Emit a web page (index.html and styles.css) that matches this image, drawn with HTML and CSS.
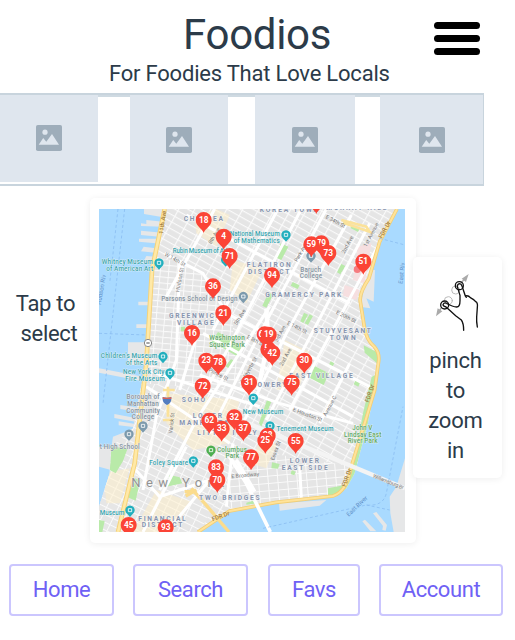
FILE: index.html
```html
<!DOCTYPE html>
<html lang="en">
<head>
<meta charset="utf-8">
<title>Foodios</title>
<link rel="stylesheet" href="styles.css">
</head>
<body>
<svg class="defs" aria-hidden="true">
  <symbol id="image" viewBox="0 0 26 26">
    <rect width="26" height="26" rx="1.8" fill="#9eadba"/>
    <circle cx="9" cy="7.2" r="2.6" fill="#dfe6ee"/>
    <path d="M2.7 19.7 7.2 13l3.1 3.8L16 9l7 10.7z" fill="#dfe6ee"/>
  </symbol>
</svg>
<header class="header">
  <div class="brand">
    <h1 class="title">Foodios</h1>
    <p class="tagline">For Foodies That Love Locals</p>
  </div>
  <button class="menu" aria-label="Menu"><span></span><span></span><span></span></button>
</header>
<section class="strip">
  <div class="tile tile-first"><svg class="thumb"><use href="#image"/></svg></div>
  <div class="gap"></div>
  <div class="tile"><svg class="thumb"><use href="#image"/></svg></div>
  <div class="gap"></div>
  <div class="tile"><svg class="thumb"><use href="#image"/></svg></div>
  <div class="gap"></div>
  <div class="tile"><svg class="thumb"><use href="#image"/></svg></div>
</section>
<main class="main">
  <p class="tap"><span>Tap to</span><span class="tap-second">select</span></p>
  <div class="card map-card">
    <svg class="map" viewBox="298 57 918 969" preserveAspectRatio="none">
      <defs>
        <pattern id="grid" width="42" height="19" patternUnits="userSpaceOnUse" patternTransform="translate(800 360) rotate(29)">
          <rect width="42" height="19" fill="#e5e5e5"/>
          <path d="M0 0H42M0 0V19" stroke="#fafafa" stroke-width="7"/>
        </pattern>
        <pattern id="west" width="25" height="18" patternUnits="userSpaceOnUse" patternTransform="rotate(5)">
          <rect width="25" height="18" fill="#e5e5e5"/>
          <path d="M0 0H25M0 0V18" stroke="#fafafa" stroke-width="6"/>
        </pattern>
        <pattern id="south" width="32" height="21" patternUnits="userSpaceOnUse" patternTransform="rotate(26)">
          <rect width="32" height="21" fill="#e6e6e6"/>
          <path d="M0 0H32M0 0V21" stroke="#fafafa" stroke-width="6"/>
        </pattern>
        <pattern id="les" width="29" height="22" patternUnits="userSpaceOnUse" patternTransform="rotate(-5)">
          <rect width="29" height="22" fill="#e5e5e5"/>
          <path d="M0 0H29M0 0V22" stroke="#fafafa" stroke-width="6"/>
        </pattern>
        <path id="pin" d="M0 39C-5 25-24 18-24 0A24 24 0 1 1 24 0C24 18 5 25 0 39Z" fill="#fb4436"/>
        <g id="poi"><path d="M0 18-8 9A14 14 0 1 1 8 9Z"/><path d="M-5-7H5V2H-5Z" fill="none" stroke="#fff" stroke-width="2.5"/></g>
        <clipPath id="land"><path d="M494 57H1192L1140 155 1108 265 1082 325 1092 420 1112 460 1138 500 1133 555 1105 700 1065 850 1040 895 1000 920 830 940 690 965 600 1026H298V950L330 850 335 770 400 715 430 560 455 330 460 230Z"/></clipPath>
      </defs>
      <rect x="298" y="57" width="918" height="969" fill="#a9daff"/>
      <g fill="#e6e7e8">
        <path d="M433 57H500V83L433 72ZM440 90 490 95V110L424 108V100L440 102ZM424 122 488 128V141L424 135ZM418 146H485V161L418 155ZM432 170 480 176V190L424 184ZM440 198 475 201V214L434 210Z"/>
        <path d="M385 457H450V500L430 525H385ZM298 535 430 560V574L298 548ZM362 645 425 655V667L362 657ZM344 672 424 687V698L344 684ZM357 694 420 704V713L357 706ZM410 403H455V414H410ZM416 335H458V346H416ZM340 740 405 715 370 850 298 830V770L335 773Z"/>
        <path d="M1108 240H1126L1122 335 1100 325 1112 355 1080 350ZM838 940 980 930 960 947 840 962ZM1216 805 1190 890 1170 920 1172 970 1182 1026H1216ZM1120 970 1130 966 1162 1005 1158 1022 1148 1020 1150 1008ZM1088 994 1096 989 1130 1024H1112Z"/>
      </g>
      <g clip-path="url(#land)">
        <rect x="298" y="57" width="918" height="969" fill="url(#grid)"/>
        <path d="M455 200 560 220 700 320 700 430 740 570 500 640 430 610Z" fill="url(#west)"/>
        <path d="M420 580 740 600 720 800 600 1026H298V730Z" fill="url(#south)"/>
        <path d="M810 790 1065 830 1040 950 690 965 690 860Z" fill="url(#les)"/>
        <g fill="#fff0c8" opacity=".5">
          <path d="M585 80 650 57 690 75 650 170 590 130ZM700 210 790 235 740 340 690 300ZM855 450 930 485 900 590 830 600ZM500 610 720 630 690 760 580 780 500 700ZM310 850 390 835 360 940 320 940ZM470 900 575 935 520 1026H400ZM780 750 830 765 800 835 755 820Z"/>
        </g>
        <g fill="#f6dfe0"><path d="M1075 170 1115 160 1095 280 1060 270ZM1035 285 1080 300 1070 330 1030 317Z"/></g>
        <g fill="#b9eaa9">
          <path d="M843 160 866 170 845 210 830 203ZM807 307 820 315 800 353 788 347ZM913 368 925 374 911 399 902 394ZM930 373 940 378 925 405 915 400ZM1025 222 1037 228 1022 253 1012 247ZM879 276 900 286 894 297 873 287ZM655 426 685 443 732 478 710 497 636 455ZM694 507 707 514 690 537 677 529ZM945 528 988 550 972 585 931 564ZM1068 570 1082 576 1076 590 1062 583ZM993 514 1004 520 998 531 987 526ZM1092 466 1138 490 1132 520 1095 488ZM1116 560 1133 552 1105 700 1065 850 1040 925 985 932 985 895 1035 885 1065 800 1090 670ZM802 630 815 635 785 710 778 700ZM335 770 384 775 370 813 348 850 330 840ZM388 860 422 870 408 932 384 922ZM510 855 540 862 548 880 500 890ZM817 817 840 822 835 836 815 835ZM876 840 888 845 884 856 873 852ZM740 938 768 930 770 940 740 944ZM395 467H422V487H395ZM543 410H557V424H543ZM1058 104 1080 116 1075 126 1052 114ZM298 990 315 993 308 1026H298Z"/>
        </g>
        <g stroke="#fff" stroke-width="9" fill="none">
          <path d="M645 57 500 320M835 57 640 420M905 57 630 580M980 57 765 460 630 730M1055 75 860 430 730 700M1110 100 800 690M1150 140 870 660M810 350 590 690 480 900M560 75 1050 340M495 190 610 250 680 370 1110 590M610 430 1060 680M470 550 780 650M600 555 840 640 1060 700M1050 520 960 700M540 220 530 510 470 680 430 900M590 440 540 600M440 590 690 760M395 825 480 920 630 870M630 870 500 1026M560 770 430 1026M700 760 680 950M900 830 905 925"/>
        </g>
        <path d="M800 355 806 450 775 600" stroke="#fff" stroke-width="13" fill="none"/>
        <path d="M505 590V680M490 600H525M490 690H520M1025 90 1100 110 1110 125 1030 98" stroke="#fbe29a" stroke-width="8" fill="none"/>
      </g>
      <path d="M495 57 457 240 440 520 405 820 355 1026" fill="none" stroke="#f6d37a" stroke-width="14"/>
      <path d="M495 57 457 240 440 520 405 820 355 1026" fill="none" stroke="#ffe9a7" stroke-width="8"/>
      <path d="M1192 57 1140 155 1108 265Q1078 310 1082 335L1094 410Q1100 450 1124 470 1142 490 1136 520L1125 600 1095 700 1055 830Q1042 905 1000 918L830 937 690 963 595 1026" fill="none" stroke="#f3ce75" stroke-width="11"/>
      <path d="M1192 57 1140 155 1108 265Q1078 310 1082 335L1094 410Q1100 450 1124 470 1142 490 1136 520L1125 600 1095 700 1055 830Q1042 905 1000 918L830 937 690 963 595 1026" fill="none" stroke="#ffe39a" stroke-width="6"/>
      <path d="M555 905H590M575 895 615 940 688 1026M558 918 590 900" fill="none" stroke="#fbdc8d" stroke-width="10"/>
      <path d="M690 800 740 880 812 1026M710 810 765 905" fill="none" stroke="#fff" stroke-width="11"/>
      <path d="M745 700 890 760 1060 830 1216 895" fill="none" stroke="#f4f4f4" stroke-width="13"/>
      <g fill="none" stroke="#83b7ee" stroke-width="2" stroke-dasharray="9 7">
        <path d="M375 57 310 640M355 57 330 280M298 430 440 435M1140 145 1216 165M790 1015 1100 945Q1150 950 1160 910L1210 650M1100 945 1170 960"/>
      </g>
      <g fill="#22afbe">
        <use href="#poi" x="478" y="221"/><use href="#poi" x="859" y="137"/><use href="#poi" x="678" y="212"/><use href="#poi" x="490" y="502"/><use href="#poi" x="511" y="551"/><use href="#poi" x="761" y="627"/><use href="#poi" x="811" y="710"/><use href="#poi" x="581" y="815"/><use href="#poi" x="391" y="963"/>
      </g>
      <g fill="#7c9aad"><use href="#poi" x="731" y="322"/><use href="#poi" x="934" y="200"/><use href="#poi" x="430" y="710"/><use href="#poi" x="388" y="735"/></g>
      <g fill="#4daf50"><use href="#poi" x="634" y="783"/></g>
      <circle cx="1073" cy="238" r="11" fill="#f57c80"/>
      <circle cx="445" cy="459" r="11" fill="#fff" stroke="#888" stroke-width="3"/>
      <path d="M440 459H450" stroke="#777" stroke-width="4"/>
      <path d="M489 621Q502 626 515 621 517 640 502 645 487 640 489 621Z" fill="#527dc0"/><path d="M489 621Q502 626 515 621V627H489Z" fill="#d5645c"/>
      <g class="district">
        <text x="611" y="94" textLength="118">CHELSEA</text><text x="868" y="65" textLength="176">KOREA TOWN</text><text x="1070" y="60" textLength="180">MURRAY HILL</text>
        <text x="807" y="232" textLength="132">FLATIRON</text><text x="807" y="253" textLength="124">DISTRICT</text>
        <text x="911" y="321" textLength="228">GRAMERCY PARK</text><text x="585" y="385" textLength="154">GREENWICH</text><text x="587" y="406" textLength="110">VILLAGE</text>
        <text x="1028" y="429" textLength="172">STUYVESANT</text><text x="1029" y="450" textLength="78">TOWN</text><text x="964" y="563" textLength="190">EAST VILLAGE</text>
        <text x="808" y="590" textLength="104">BOWERY</text><text x="581" y="636" textLength="70">SOHO</text><text x="623" y="684" textLength="88">LOWER</text><text x="622" y="704" textLength="166">MANHATTAN</text><text x="682" y="734" textLength="178">LITTLE ITALY</text>
        <text x="914" y="819" textLength="88">LOWER</text><text x="915" y="840" textLength="138">EAST SIDE</text><text x="689" y="930" textLength="182">TWO BRIDGES</text><text x="487" y="992" textLength="142">FINANCIAL</text><text x="487" y="1012" textLength="122">DISTRICT</text>
      </g>
      <g class="museum">
        <text x="765" y="139" textLength="150">National Museum</text><text x="771" y="159" textLength="138">of Mathematics</text><text x="602" y="190" textLength="165">Rubin Museum of Art</text>
        <text x="383" y="223" textLength="153">Whitney Museum</text><text x="390" y="242" textLength="140">of American Art</text>
        <text x="388" y="505" textLength="169">Children's Museum</text><text x="426" y="524" textLength="94">of the Arts</text><text x="432" y="552" textLength="124">New York City</text><text x="436" y="572" textLength="118">Fire Museum</text>
        <text x="790" y="671" textLength="121">New Museum</text><text x="916" y="722" textLength="171">Tenement Museum</text><text x="507" y="826" textLength="117">Foley Square</text><text x="337" y="975" textLength="74">Museum</text>
      </g>
      <g class="place">
        <text x="599" y="333" textLength="229">Parsons School of Design</text><text x="933" y="246" textLength="62">Baruch</text><text x="934" y="264" textLength="67">College</text>
        <text x="430" y="628" textLength="99">Borough of</text><text x="430" y="648" textLength="94">Manhattan</text><text x="430" y="668" textLength="101">Community</text><text x="430" y="688" textLength="67">College</text><text x="360" y="778" textLength="120">t High School</text>
      </g>
      <g class="park">
        <text x="682" y="450" textLength="106">Washington</text><text x="682" y="470" textLength="107">Square Park</text><text x="697" y="785" textLength="90">Columbus</text><text x="698" y="804" textLength="41">Park</text>
        <text x="1088" y="721" textLength="60">John V</text><text x="1089" y="740" textLength="112">Lindsay East</text><text x="1089" y="760" textLength="90">River Park</text>
      </g>
      <g class="street">
        <text transform="translate(495 98) rotate(-82)" class="drive">11th Ave</text><text transform="translate(1160 122) rotate(-61)" class="drive">FDR Dr</text><text transform="translate(1116 612) rotate(-72)" class="drive">FDR Dr</text><text transform="translate(1047 865) rotate(-70)" class="drive">FDR Dr</text><text transform="translate(665 984) rotate(-20)" class="drive">FDR Dr</text>
        <text transform="translate(524 213) rotate(29)">W 14th St</text><text transform="translate(545 270) rotate(-80)">Hudson St</text><text transform="translate(648 140) rotate(-60)">8th Ave</text><text transform="translate(725 384) rotate(-58)">5th Ave</text><text transform="translate(908 190) rotate(-60)">Park Ave</text><text transform="translate(1005 99) rotate(28)">E 34th St</text><text transform="translate(1048 167) rotate(-62)">2nd Ave</text><text transform="translate(1119 137) rotate(-62)">1st Avenue</text><text transform="translate(1037 385) rotate(27)">E 20th St</text><text transform="translate(890 417) rotate(27)">E 14th St</text><text transform="translate(765 457) rotate(27)">E 8th St</text><text transform="translate(846 434) rotate(-62)">3rd Ave</text><text transform="translate(862 504) rotate(-62)">2nd Ave</text><text transform="translate(752 542) rotate(-60)">Lafayette St</text><text transform="translate(654 558) rotate(27)">Prince St</text><text transform="translate(922 679) rotate(20)">E Houston St</text><text transform="translate(995 650) rotate(-62)">Avenue C</text><text transform="translate(521 700) rotate(-84)">Varick St</text><text transform="translate(833 784) rotate(-70)">Essex St</text><text transform="translate(737 861) rotate(-5)">E Broadway</text><text transform="translate(1164 880) rotate(22)" textLength="98">Williamsburg Br</text>
        <text transform="translate(1076 953) rotate(-44)" class="river">East River</text><text transform="translate(311 300) rotate(-80)" class="river">Hudson Riv</text><text transform="translate(1212 250) rotate(-84)" class="river">East Riv</text>
      </g>
      <text x="395" y="890" class="city" textLength="278">New York</text>
      <g class="pins">
        <use href="#pin" x="950" y="33"/>
        <g transform="translate(965 160)"><use href="#pin"/><text y="8">79</text></g>
        <g transform="translate(795 433)"><use href="#pin"/><text x="-4" y="8">69</text></g>
        <g transform="translate(806 478)"><use href="#pin"/><text x="-5" y="6">5</text></g>
        <g transform="translate(804 737)"><use href="#pin"/><text y="7">28</text></g>
        <g transform="translate(612 90)"><use href="#pin"/><text y="8">18</text></g>
        <g transform="translate(672 140)"><use href="#pin"/><text y="8">4</text></g>
        <g transform="translate(690 198)"><use href="#pin"/><text y="8">71</text></g>
        <g transform="translate(935 163)"><use href="#pin"/><text y="8">59</text></g>
        <g transform="translate(986 189)"><use href="#pin"/><text y="8">73</text></g>
        <g transform="translate(1091 215)"><use href="#pin"/><text y="8">51</text></g>
        <g transform="translate(817 256)"><use href="#pin"/><text y="8">94</text></g>
        <g transform="translate(640 289)"><use href="#pin"/><text y="8">36</text></g>
        <g transform="translate(671 369)"><use href="#pin"/><text y="8">21</text></g>
        <g transform="translate(577 429)"><use href="#pin"/><text y="8">16</text></g>
        <g transform="translate(807 434)"><use href="#pin"/><text y="8">19</text></g>
        <g transform="translate(818 489)"><use href="#pin"/><text y="8">42</text></g>
        <g transform="translate(620 512)"><use href="#pin"/><text y="8">23</text></g>
        <g transform="translate(656 517)"><use href="#pin"/><text y="8">78</text></g>
        <g transform="translate(914 512)"><use href="#pin"/><text y="8">30</text></g>
        <g transform="translate(609 588)"><use href="#pin"/><text y="8">72</text></g>
        <g transform="translate(748 578)"><use href="#pin"/><text y="8">31</text></g>
        <g transform="translate(876 578)"><use href="#pin"/><text y="8">75</text></g>
        <g transform="translate(629 692)"><use href="#pin"/><text y="8">62</text></g>
        <g transform="translate(704 682)"><use href="#pin"/><text y="8">32</text></g>
        <g transform="translate(666 716)"><use href="#pin"/><text y="8">33</text></g>
        <g transform="translate(731 715)"><use href="#pin"/><text y="8">37</text></g>
        <g transform="translate(797 752)"><use href="#pin"/><text y="8">25</text></g>
        <g transform="translate(888 753)"><use href="#pin"/><text y="8">55</text></g>
        <g transform="translate(754 802)"><use href="#pin"/><text y="8">77</text></g>
        <g transform="translate(649 832)"><use href="#pin"/><text y="8">83</text></g>
        <g transform="translate(653 870)"><use href="#pin"/><text y="8">70</text></g>
        <g transform="translate(387 1005)"><use href="#pin"/><text y="8">45</text></g>
        <g transform="translate(498 1012)"><use href="#pin"/><text y="8">93</text></g>
      </g>
    </svg>
  </div>
  <div class="card pinch-card">
    <svg class="gesture" viewBox="70 65 135 180" fill="none" stroke-linecap="round" stroke-linejoin="round">
      <path d="M148 98 163 81M89 172 80 187" stroke="#aaa" stroke-width="4"/>
      <path d="M171 71 150 85 163 95ZM73 198 78 174 92 183Z" fill="#aaa"/>
      <circle cx="132" cy="119" r="12" stroke="#bbb" stroke-width="3"/><circle cx="110" cy="151" r="12" stroke="#bbb" stroke-width="3"/>
      <g stroke="#111" stroke-width="4">
        <circle cx="143" cy="106" r="12"/><circle cx="99" cy="164" r="12"/>
        <path d="M137 109Q137 101 143 100 149 100 151 107L161 137Q170 134 176 142 188 148 192 154 199 157 197 171L195 200Q194 212 197 230M137 109 145 135V151Q145 170 135 170 124 170 103 158 96 157 94 163 94 167 103 170L114 180 132 196 149 209Q156 219 156 240M161 137 164 141"/>
      </g>
    </svg>
    <p class="pinch">pinch<br>to<br>zoom<br>in</p>
  </div>
</main>
<nav class="nav">
  <a class="btn home">Home</a><a class="btn search">Search</a><a class="btn favs">Favs</a><a class="btn account">Account</a>
</nav>
</body>
</html>
```
FILE: styles.css
```css
* { box-sizing: border-box; }
body { margin: 0; width: 515px; height: 640px; overflow: hidden; background: #fff; color: #2c3b49; font-family: Roboto, "Liberation Sans", sans-serif; }
h1, p { margin: 0; font-weight: 400; }
.defs { display: none; }

.header { height: 93px; display: grid; grid-template-columns: 434px 47px; align-items: start; }
.brand { display: flex; flex-direction: column; padding-left: 109px; }
.title { height: 60px; padding: 10px 0 0 74px; font-size: 42px; line-height: 49px; letter-spacing: -0.3px; white-space: nowrap; }
.tagline { font-size: 22px; line-height: 28px; white-space: nowrap; letter-spacing: -0.21px; }
.menu { display: flex; flex-direction: column; gap: 6px; margin: 22px 0 0; padding: 0; border: 0; background: none; }
.menu span { width: 46px; height: 7px; border-radius: 4px; background: #000; }

.strip { width: 484px; height: 93px; display: grid; grid-template-columns: 98px 32px 98px 27px 100px 25px 103px; border: solid #c8d4dd; border-width: 2px 1px 2px 0; background: #fff; }
.tile { display: flex; align-items: center; justify-content: center; background: #dfe6ee; }
.tile-first { height: 87px; padding-bottom: 2px; }
.gap { border-top: 2px solid #cfdae2; }
.thumb { width: 26px; height: 26px; }

.main { display: flex; align-items: flex-start; height: 366px; padding-top: 12px; }
.tap { width: 91px; margin-right: -1px; padding-top: 91px; display: flex; flex-direction: column; align-items: center; font-size: 22px; line-height: 30px; letter-spacing: -0.3px; }
.tap-second { margin-left: 7px; }
.card { background: #fff; border-radius: 5px; box-shadow: 0 1px 7px rgba(0,0,0,.07); flex: none; }
.map-card { width: 326px; height: 345px; padding: 11px 11px 11px 9px; }
.map { display: block; width: 306px; height: 323px; }
.map text { font-family: Roboto, sans-serif; text-anchor: middle; }
.district text { font-size: 20px; font-weight: 700; fill: #8794ae; stroke: #f5f5f5; stroke-width: 3px; paint-order: stroke; }
.museum text { font-size: 19px; font-weight: 500; fill: #3ba3ad; stroke: #eef7f8; stroke-width: 2px; paint-order: stroke; }
.place text { font-size: 19px; font-weight: 500; fill: #8493a0; stroke: #eee; stroke-width: 2px; paint-order: stroke; }
.park text { font-size: 19px; font-weight: 500; fill: #5ea56a; stroke: #eef7ea; stroke-width: 2px; paint-order: stroke; }
.street text { font-size: 16px; fill: #777; }
.street .drive { font-size: 18px; font-weight: 500; fill: #a27b3e; }
.street .river { font-size: 18px; fill: #608fc8; }
.map .city { font-size: 39px; text-anchor: start; fill: #929292; stroke: #f3f3f3; stroke-width: 3px; paint-order: stroke; }
.pins text { font-size: 25px; font-weight: 700; fill: #fff; }

.pinch-card { width: 89px; height: 221px; margin: 59px 0 0 -3px; padding-top: 15px; display: flex; flex-direction: column; align-items: center; }
.gesture { width: 45px; height: 60px; }
.pinch { margin-top: 14px; padding-right: 4px; font-size: 22px; line-height: 30px; letter-spacing: -0.2px; text-align: center; }

.nav { display: flex; align-items: flex-start; padding: 12px 0 0 9px; }
.btn { height: 52px; border: 2px solid #cbc6fe; border-radius: 4px; color: #6f61f5; font-size: 22px; line-height: 47px; letter-spacing: -0.4px; text-align: center; }
.home { width: 105px; margin-right: 19px; }
.search { width: 115px; margin-right: 20px; }
.favs { width: 92px; margin-right: 19px; }
.account { width: 124px; }
```
